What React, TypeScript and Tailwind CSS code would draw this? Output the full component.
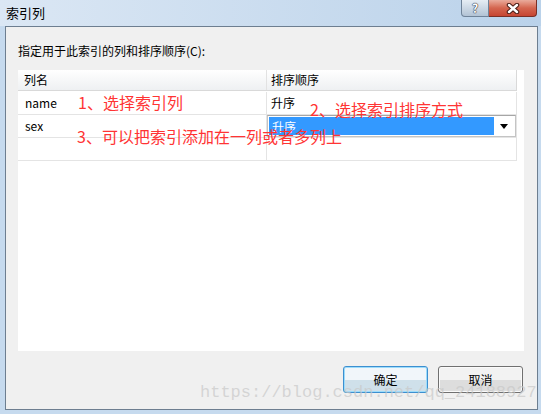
const annotation = "absolute text-[16px] leading-[16px] text-[#ff3434] whitespace-nowrap";

export default function App() {
  return (
    <div className="relative w-[541px] h-[414px] overflow-hidden flex flex-col bg-[#c6daee] font-['Noto_Sans_CJK_SC',sans-serif] text-[12px] text-black">
      {/* title bar */}
      <div className="h-[26px] flex items-start justify-between bg-linear-to-r from-[#dbe7f4] to-[#bad2ea]">
        <span className="pl-[6px] pt-[4px] text-[13px] leading-[18px]">索引列</span>
        <div className="flex mr-[4px]">
          <div className="w-[28px] h-[17px] flex items-center justify-center rounded-bl-[4px] border border-t-0 border-[#6f8399] bg-linear-to-b from-[#e6edf4] to-[#b2c3d5] text-white font-bold text-[12px] leading-none [text-shadow:0_0_1px_#334,0_0_1px_#334,0_0_1px_#334]">
            ?
          </div>
          <div className="w-[48px] h-[17px] flex items-center justify-center rounded-br-[4px] border border-t-0 border-l-0 border-[#7a2f25] bg-linear-to-b from-[#e9ab9c] via-[#d4654f] to-[#c64532]">
            <svg width="14" height="11" viewBox="0 0 14 11">
              <path d="M3 2 L11 9 M11 2 L3 9" stroke="#4a1c16" strokeWidth="4.5" strokeLinecap="round" />
              <path d="M3 2 L11 9 M11 2 L3 9" stroke="#ffffff" strokeWidth="2.4" strokeLinecap="round" />
            </svg>
          </div>
        </div>
      </div>

      {/* dialog body */}
      <div className="flex-1 ml-[5px] mr-[3px] mb-[4px] border border-[#6d7e90] bg-[#f0f0f0] flex flex-col">
        <div className="pl-[12px] pt-[16px] leading-[16px]">指定用于此索引的列和排序顺序(C):</div>

        <div className="mt-[11px] mx-[12px] w-[506px] h-[281px] bg-white">
          <div className="w-[499px] h-[21px] flex border-b border-r border-[#d9d9d9] bg-linear-to-b from-[#ffffff] to-[#eef0f2]">
            <div className="w-[249px] pl-[6px] leading-[20px] border-r border-[#e2e2e2]">列名</div>
            <div className="flex-1 pl-[4px] leading-[20px]">排序顺序</div>
          </div>
          <div className="h-px" />
          <div className="w-[499px] h-[23px] flex border-b border-r border-[#e4e4e4]">
            <div className="w-[249px] pl-[7px] leading-[22px] border-r border-[#e4e4e4]">name</div>
            <div className="flex-1 pl-[4px] leading-[22px]">升序</div>
          </div>
          <div className="w-[499px] h-[23px] flex border-b border-r border-[#e4e4e4]">
            <div className="w-[249px] pl-[7px] leading-[22px] border-r border-[#e4e4e4]">sex</div>
            <div className="flex-1 flex border border-[#c4c4c4] border-t-[#a6a6a6] bg-white p-[1px]">
              <div className="flex-1 bg-[#3399ff] text-white pl-[3px] leading-[19px]">升序</div>
              <div className="w-[20px] flex items-center justify-center">
                <svg width="8" height="5" viewBox="0 0 8 5">
                  <path d="M0 0 H8 L4 5 Z" fill="#000" />
                </svg>
              </div>
            </div>
          </div>
          <div className="w-[499px] h-[23px] flex border-b border-r border-[#e4e4e4]">
            <div className="w-[249px] border-r border-[#e4e4e4]" />
            <div className="flex-1" />
          </div>
        </div>

        <div className="mt-[15px] pr-[14px] flex justify-end gap-[10px]">
          <button className="w-[85px] h-[27px] rounded-[3px] border border-[#3c8fd0] shadow-[inset_0_0_0_1px_#9ddcfb] bg-linear-to-b from-[#f1f6fa] from-50% to-[#cfe0ea] to-50% leading-none">
            确定
          </button>
          <button className="w-[85px] h-[27px] rounded-[3px] border border-[#707070] shadow-[inset_0_0_0_1px_#fafafa] bg-linear-to-b from-[#f2f2f2] from-50% to-[#dddddd] to-50% leading-none">
            取消
          </button>
        </div>
      </div>

      {/* annotations drawn over the screenshot */}
      <span className={`${annotation} left-[78px] top-[94px]`}>1、选择索引列</span>
      <span className={`${annotation} left-[310px] top-[101px]`}>2、选择索引排序方式</span>
      <span className={`${annotation} left-[77px] top-[128px]`}>3、可以把索引添加在一列或者多列上</span>

      <span className="absolute left-[200px] top-[383px] font-['Liberation_Mono',monospace] text-[17px] leading-[20px] text-[#c8c8c8]/70 whitespace-nowrap">
        https://blog.csdn.net/qq_24188927
      </span>
    </div>
  );
}
